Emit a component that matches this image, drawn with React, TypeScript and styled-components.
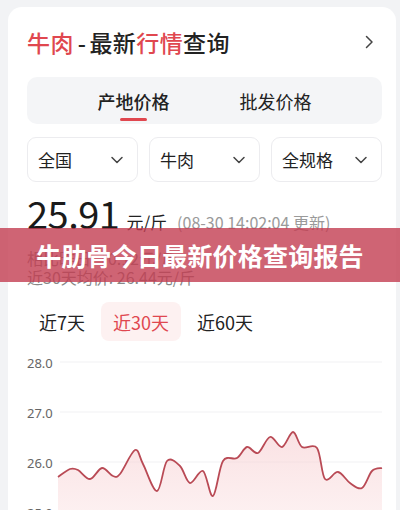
import React from "react";
import styled, { createGlobalStyle } from "styled-components";

const RED = "#e0474f";

const GlobalStyle = createGlobalStyle`
  html, body {
    margin: 0;
    padding: 0;
    background: #f2f3f5;
    font-family: "Noto Sans CJK SC", "Noto Sans", sans-serif;
    color: #222;
  }
`;

const Page = styled.div`
  position: relative;
  width: 400px;
  height: 510px;
  overflow: hidden;
  padding: 7px 4px 0 8px;
  box-sizing: border-box;
`;

const Card = styled.div`
  background: #fff;
  border-radius: 14px;
  padding: 0 14px 0 19px;
  height: 560px;
`;

const TitleRow = styled.div`
  display: flex;
  align-items: center;
  justify-content: space-between;
  height: 70px;
  padding-right: 6px;
  box-sizing: border-box;
`;

const Title = styled.div`
  font-size: 23px;
  font-weight: 500;
  letter-spacing: 0.4px;
  color: #222;
`;

const Hl = styled.span`
  color: ${RED};
`;

const Dash = styled.span`
  margin: 0 3px 0 4px;
`;

const TabBar = styled.div`
  display: flex;
  height: 47px;
  background: #f4f5f7;
  border-radius: 10px;
`;

const Tab = styled.div<{ $active?: boolean }>`
  position: relative;
  flex: 1;
  display: flex;
  align-items: center;
  justify-content: ${(p) => (p.$active ? "flex-end" : "flex-start")};
  padding: 0 ${(p) => (p.$active ? "37px" : "0")} 0 ${(p) => (p.$active ? "0" : "33px")};
  font-size: 18px;
  font-weight: ${(p) => (p.$active ? 500 : 400)};
  color: #222;
  &::after {
    content: "";
    display: ${(p) => (p.$active ? "block" : "none")};
    position: absolute;
    bottom: 3px;
    right: 60px;
    width: 27px;
    height: 3px;
    border-radius: 2px;
    background: ${RED};
  }
`;

const SelectRow = styled.div`
  display: grid;
  grid-template-columns: repeat(3, 1fr);
  gap: 11px;
  margin-top: 13px;
`;

const Select = styled.div`
  display: flex;
  align-items: center;
  justify-content: space-between;
  height: 45px;
  border: 1px solid #ececef;
  border-radius: 9px;
  padding: 0 13px 0 10px;
  box-sizing: border-box;
  font-size: 17px;
  color: #222;
`;

const PriceRow = styled.div`
  display: flex;
  align-items: baseline;
  margin-top: 3px;
  height: 64px;
`;

const Price = styled.span`
  font-size: 38px;
  font-weight: 400;
  letter-spacing: -0.5px;
  color: #1a1a1a;
`;

const Unit = styled.span`
  font-size: 17px;
  margin-left: 7px;
  color: #222;
`;

const Updated = styled.span`
  font-size: 16px;
  margin-left: 10px;
  color: #9a9a9a;
`;

const InfoLine = styled.div`
  font-size: 16px;
  color: #888;
  line-height: 19px;
`;

const PeriodRow = styled.div`
  display: flex;
  align-items: center;
  gap: 4px;
  margin-top: 15px;
`;

const Period = styled.div<{ $active?: boolean }>`
  height: 39px;
  padding: 0 12px;
  display: flex;
  align-items: center;
  border-radius: 8px;
  font-size: 18px;
  color: ${(p) => (p.$active ? RED : "#222")};
  background: ${(p) => (p.$active ? "#fdf1f1" : "transparent")};
`;

const Chart = styled.div`
  margin-top: 10px;
  height: 200px;
`;

const Banner = styled.div`
  position: absolute;
  left: 0;
  right: 0;
  top: 228px;
  height: 54px;
  background: rgba(195, 61, 81, 0.8);
  display: flex;
  align-items: center;
  justify-content: center;
  color: #fff;
  font-size: 25px;
  font-weight: 700;
  letter-spacing: 0.2px;
`;

const Chevron = ({ dir }: { dir: "right" | "down" }) => (
  <svg width="14" height="14" viewBox="0 0 14 14" fill="none">
    <path
      d={dir === "right" ? "M4.5 1.5 L10 7 L4.5 12.5" : "M2 4.5 L7 9.5 L12 4.5"}
      stroke="#444"
      strokeWidth="1.5"
      strokeLinecap="round"
      strokeLinejoin="round"
    />
  </svg>
);

// points in page pixels, taken from the reference
const RAW: [number, number][] = [
  [58, 476], [70, 468], [78, 469], [90, 478], [102, 467], [113, 475], [120, 473],
  [135, 449], [143, 463], [157, 490], [167, 460], [180, 465], [190, 482], [203, 470],
  [213, 495], [223, 460], [237, 457], [247, 446], [258, 452], [270, 436], [282, 446],
  [293, 431], [302, 446], [317, 447], [325, 478], [338, 471], [350, 482], [362, 487],
  [372, 470], [382, 467],
];

const OX = 27;
const OY = 350;

const smoothPath = (pts: [number, number][]) => {
  let d = `M${pts[0][0]} ${pts[0][1]}`;
  for (let i = 0; i < pts.length - 1; i++) {
    const p0 = pts[i - 1] || pts[i];
    const p1 = pts[i];
    const p2 = pts[i + 1];
    const p3 = pts[i + 2] || p2;
    const c1x = p1[0] + (p2[0] - p0[0]) / 6;
    const c1y = p1[1] + (p2[1] - p0[1]) / 6;
    const c2x = p2[0] - (p3[0] - p1[0]) / 6;
    const c2y = p2[1] - (p3[1] - p1[1]) / 6;
    d += ` C${c1x.toFixed(1)} ${c1y.toFixed(1)} ${c2x.toFixed(1)} ${c2y.toFixed(1)} ${p2[0]} ${p2[1]}`;
  }
  return d;
};

const LineChart = () => {
  const pts = RAW.map(([x, y]) => [x - OX, y - OY] as [number, number]);
  const line = smoothPath(pts);
  const last = pts[pts.length - 1];
  const area = `${line} L${last[0]} 200 L${pts[0][0]} 200 Z`;
  const ticks = [
    { label: "28.0", y: 12 },
    { label: "27.0", y: 62 },
    { label: "26.0", y: 112 },
    { label: "25.0", y: 162 },
  ];
  return (
    <svg width="356" height="200" viewBox="0 0 356 200" style={{ display: "block" }}>
      <defs>
        <linearGradient id="fill" x1="0" y1="0" x2="0" y2="1">
          <stop offset="0%" stopColor="#f6c9cc" stopOpacity="0.55" />
          <stop offset="100%" stopColor="#fdeeee" stopOpacity="0.5" />
        </linearGradient>
      </defs>
      {ticks.map((t) => (
        <g key={t.label}>
          <line x1="33" x2="355" y1={t.y - 1} y2={t.y - 1} stroke="#f1f1f3" strokeWidth="1" />
          <text x="0" y={t.y + 4.5} fontSize="13" fill="#666" fontFamily='"Noto Sans", sans-serif'>
            {t.label}
          </text>
        </g>
      ))}
      <path d={area} fill="url(#fill)" />
      <path d={line} fill="none" stroke="#b94a55" strokeWidth="1.8" strokeLinejoin="round" />
    </svg>
  );
};

export default function App() {
  return (
    <>
      <GlobalStyle />
      <Page>
        <Card>
          <TitleRow>
            <Title>
              <Hl>牛肉</Hl>
              <Dash>-</Dash>最新<Hl>行情</Hl>查询
            </Title>
            <Chevron dir="right" />
          </TitleRow>
          <TabBar>
            <Tab $active>产地价格</Tab>
            <Tab>批发价格</Tab>
          </TabBar>
          <SelectRow>
            <Select>
              全国
              <Chevron dir="down" />
            </Select>
            <Select>
              牛肉
              <Chevron dir="down" />
            </Select>
            <Select>
              全规格
              <Chevron dir="down" />
            </Select>
          </SelectRow>
          <PriceRow>
            <Price>25.91</Price>
            <Unit>元/斤</Unit>
            <Updated>(08-30 14:02:04 更新)</Updated>
          </PriceRow>
          <InfoLine>相比昨日: +0.12元/斤</InfoLine>
          <InfoLine>近30天均价: 26.44元/斤</InfoLine>
          <PeriodRow>
            <Period>近7天</Period>
            <Period $active>近30天</Period>
            <Period>近60天</Period>
          </PeriodRow>
          <Chart>
            <LineChart />
          </Chart>
        </Card>
        <Banner>牛肋骨今日最新价格查询报告</Banner>
      </Page>
    </>
  );
}
